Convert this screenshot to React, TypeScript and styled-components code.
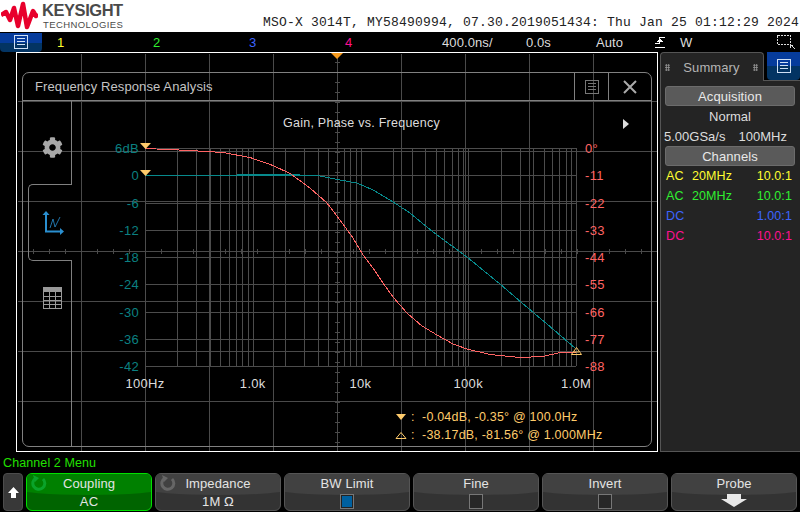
import styled, { createGlobalStyle } from "styled-components"
import { FaCog } from "react-icons/fa"

const GridLine = "#4a4a4a"
const Teal = "#0b8082"
const Salmon = "#ff6464"
const Marker = "#ffcb6b"

const Global = createGlobalStyle`
    html, body {
        margin: 0;
        padding: 0;
        background: #000;
    }
    body {
        font-family: "Liberation Sans", Arial, sans-serif;
        font-size: 13px;
        letter-spacing: 0.1px;
    }
`

const Screen = styled.div`
    width: 800px;
    height: 512px;
    overflow: hidden;
    display: flex;
    flex-direction: column;
    background: #000;
    color: #ddd;
`

const Header = styled.div`
    height: 32px;
    flex: 0 0 32px;
    background: #fff;
    display: flex;
    justify-content: space-between;
    align-items: flex-end;
`

const Logo = styled.div`
    display: flex;
    gap: 4px;
    padding-left: 1px;
    height: 32px;
    align-items: center;
`

const LogoWords = styled.div`
    display: flex;
    flex-direction: column;
    color: #4a4a4a;
`

const LogoName = styled.div`
    font-size: 16.5px;
    line-height: 14px;
    font-weight: 700;
    letter-spacing: -0.45px;
`

const LogoSub = styled.div`
    font-size: 9.5px;
    line-height: 11px;
    margin-top: 2px;
    margin-left: 1px;
    letter-spacing: 0.4px;
`

const DeviceLine = styled.div`
    font-family: "Liberation Mono", monospace;
    font-size: 13px;
    line-height: 15px;
    letter-spacing: 0.2px;
    color: #222;
    white-space: nowrap;
    padding-right: 1px;
    padding-bottom: 2px;
`

const StatusBar = styled.div`
    height: 20px;
    flex: 0 0 20px;
    display: flex;
    align-items: center;
`

const BlueButton = styled.div<{ $w: number; $h: number }>`
    width: ${p => p.$w}px;
    height: ${p => p.$h}px;
    flex: 0 0 ${p => p.$w}px;
    box-sizing: border-box;
    display: flex;
    align-items: center;
    justify-content: center;
    border-radius: 0 0 4px 4px;
    background: linear-gradient(#063c9c 0 50%, #033463 50% 100%);
`

const ChannelTag = styled.div<{ $color: string }>`
    width: 96px;
    flex: 0 0 96px;
    box-sizing: border-box;
    padding-left: 15px;
    color: ${p => p.$color};
    font-size: 13px;
`

const StatusItem = styled.div<{ $w: number }>`
    width: ${p => p.$w}px;
    flex: 0 0 ${p => p.$w}px;
    display: flex;
    align-items: center;
`

const StatusGap = styled.div`
    width: 16px;
    flex: 0 0 16px;
`

const Main = styled.div`
    height: 401px;
    flex: 0 0 401px;
    display: flex;
    padding-left: 16px;
    gap: 2px;
`

const Scope = styled.div`
    position: relative;
    width: 642px;
    height: 400px;
    flex: 0 0 642px;
    box-sizing: border-box;
    border: 1px solid #fff;
    box-shadow: inset 1px 1px 0 #000;
    background:
        linear-gradient(${GridLine} 1px, transparent 1px) 318px 9px / 5px 10px repeat-y,
        linear-gradient(90deg, ${GridLine} 1px, transparent 1px) 0 196px / 16px 5px repeat-x,
        linear-gradient(90deg, ${GridLine} 1px, transparent 1px) 0 0 / 64px 100%,
        linear-gradient(${GridLine} 1px, transparent 1px) 0 -2px / 100% 50px;
`

const TriggerMark = styled.div`
    position: absolute;
    left: 314px;
    top: 0;
    width: 0;
    height: 0;
    border-left: 6px solid transparent;
    border-right: 6px solid transparent;
    border-top: 6px solid #f59a1e;
`

const Dialog = styled.div`
    position: absolute;
    left: 5px;
    top: 19px;
    width: 630px;
    height: 375px;
    box-sizing: border-box;
    border: 1px solid #808080;
    border-radius: 7px;
    display: flex;
    flex-direction: column;
`

const TitleBar = styled.div`
    height: 28px;
    flex: 0 0 28px;
    box-sizing: border-box;
    border-bottom: 1px solid #808080;
    display: flex;
    align-items: center;
    justify-content: space-between;
    padding-left: 12px;
    color: #c4c4c4;
`

const TitleActions = styled.div`
    display: flex;
    height: 100%;
`

const TitleAction = styled.div<{ $w: number }>`
    width: ${p => p.$w}px;
    box-sizing: border-box;
    border-left: 1px solid #808080;
    display: flex;
    align-items: center;
    justify-content: center;
`

const DialogBody = styled.div`
    flex: 1;
    min-height: 0;
    display: flex;
`

const ToolColumn = styled.div`
    width: 49px;
    flex: 0 0 49px;
    display: flex;
    flex-direction: column;
`

const ToolTab = styled.div`
    height: 83px;
    box-sizing: border-box;
    border-right: 1px solid #808080;
    padding: 36px 0 0 19px;
`

const ToolTabActive = styled.div`
    height: 77px;
    margin-left: 5px;
    box-sizing: border-box;
    border: 1px solid #808080;
    border-right: none;
    border-radius: 5px 0 0 5px;
    padding: 26px 0 0 13px;
`

const ToolTabLast = styled.div`
    flex: 1;
    box-sizing: border-box;
    border-right: 1px solid #808080;
    padding: 26px 0 0 20px;
`

const PlotColumn = styled.div`
    flex: 1;
    min-width: 0;
    display: flex;
    flex-direction: column;
`

const PlotHead = styled.div`
    height: 37px;
    flex: 0 0 37px;
    box-sizing: border-box;
    display: flex;
    align-items: flex-start;
    padding: 15px 0 0 211px;
    color: #ddd;
    font-size: 12.5px;
    letter-spacing: 0.25px;
`

const PlotArrow = styled.div`
    margin: 3px 0 0 183px;
    width: 0;
    height: 0;
    border-top: 5px solid transparent;
    border-bottom: 5px solid transparent;
    border-left: 6px solid #ddd;
`

const PlotSvg = styled.svg`
    display: block;
    flex: 0 0 260px;
`

const AxisText = styled.text`
    font-family: "Liberation Sans", Arial, sans-serif;
    font-size: 13px;
    letter-spacing: 0.3px;
`

const Readouts = styled.div`
    flex: 1;
    display: flex;
    flex-direction: column;
    gap: 3px;
    padding: 11px 0 0 323px;
    color: ${Marker};
    font-size: 12.5px;
    letter-spacing: 0.2px;
`

const ReadoutRow = styled.div`
    display: flex;
    align-items: center;
    gap: 4px;
    height: 15px;
    white-space: nowrap;
`

const SidePanel = styled.div`
    width: 140px;
    flex: 0 0 140px;
    height: 400px;
    display: flex;
    flex-direction: column;
`

const TabRow = styled.div`
    height: 28px;
    flex: 0 0 28px;
    display: flex;
    gap: 3px;
`

const SummaryTab = styled.div`
    width: 104px;
    height: 29px;
    box-sizing: border-box;
    border: 1px solid #555;
    border-bottom: none;
    border-radius: 4px 4px 0 0;
    background: #242424;
    position: relative;
    z-index: 1;
    display: flex;
    align-items: center;
    justify-content: space-between;
    padding: 0 5px 0 4px;
    color: #b4b4b4;
`

const GripDots = styled.div`
    width: 5px;
    height: 7px;
    background: radial-gradient(circle, #999 0.8px, transparent 1px) 0 0 / 2.5px 2.4px;
`

const SideBody = styled.div`
    flex: 1;
    box-sizing: border-box;
    border: 1px solid #555;
    border-right: none;
    background: #242424;
    padding: 5px 5px 0 4px;
    display: flex;
    flex-direction: column;
    align-items: stretch;
`

const SectionHead = styled.div`
    height: 20px;
    box-sizing: border-box;
    border: 1px solid #6c6c6c;
    border-radius: 3px;
    background: #5a5a5a;
    color: #e8e8e8;
    display: flex;
    align-items: center;
    justify-content: center;
`

const SideLine = styled.div<{ $spread?: boolean }>`
    height: 20px;
    display: flex;
    align-items: center;
    justify-content: ${p => (p.$spread ? "space-between" : "center")};
    color: #ddd;
    white-space: nowrap;
    letter-spacing: 0;
    margin-left: ${p => (p.$spread ? "-1px" : "0")};
    padding-right: ${p => (p.$spread ? "8px" : "0")};
`

const ChannelRow = styled.div<{ $color: string }>`
    height: 20px;
    display: grid;
    grid-template-columns: 26px 1fr auto;
    align-items: center;
    color: ${p => p.$color};
    padding: 0 3px 0 1px;
    letter-spacing: 0.1px;
    font-size: 12.5px;
`

const MenuTitle = styled.div`
    height: 20px;
    flex: 0 0 20px;
    display: flex;
    align-items: center;
    padding-left: 3px;
    color: #22e000;
    font-size: 12.5px;
`

const SoftRow = styled.div`
    height: 38px;
    display: flex;
    gap: 3px;
    padding-left: 3px;
`

const UpKey = styled.div`
    width: 20px;
    height: 38px;
    box-sizing: border-box;
    border: 1px solid #4c4c4c;
    border-radius: 4px;
    background: #383838;
    display: flex;
    align-items: center;
    justify-content: center;
`

const SoftKey = styled.div<{ $on?: boolean }>`
    position: relative;
    width: 126px;
    height: 38px;
    box-sizing: border-box;
    overflow: hidden;
    border: 1px solid ${p => (p.$on ? "#00e000" : "#555")};
    border-radius: 6px;
    background: ${p => (p.$on ? "#006400" : "#333")};
    display: flex;
    flex-direction: column;
    align-items: center;
    color: #e4e4e4;
    &::before {
        content: "";
        position: absolute;
        left: -10px;
        right: -10px;
        top: -6px;
        height: 27px;
        border-radius: 0 0 50% 50% / 0 0 6px 6px;
        background: ${p => (p.$on ? "#008000" : "#414141")};
    }
    & > * {
        position: relative;
    }
`

const SoftLabel = styled.div`
    height: 19px;
    line-height: 19px;
`

const SoftValue = styled.div`
    height: 18px;
    line-height: 17px;
`

const SoftSpin = styled.svg`
    position: absolute !important;
    left: 3px;
    top: 1px;
`

const CheckBox = styled.div<{ $on?: boolean }>`
    width: 14px;
    height: 15px;
    box-sizing: border-box;
    border: 1px solid #777;
    background: ${p => (p.$on ? "#00609f" : "#272727")};
    box-shadow: ${p => (p.$on ? "inset 0 0 0 1px #222" : "none")};
    margin-top: 1px;
`

function MenuGlyph({ size, color }: { size: number, color: string }) {
    const s = size
    return <svg width={s} height={s} viewBox="0 0 14 14" shapeRendering="crispEdges">
        <rect x="0.5" y="0.5" width="13" height="13" fill="none" stroke={color} />
        <path d="M3 3.5h8M3 6.5h8M3 9.5h8" stroke={color} />
    </svg>
}

function Wave() {
    return <svg width="37" height="30" viewBox="0 0 37 30">
        <path
            d="M0 14 L5 11 L9 19 L13 7 L17 25 L22 3 L26 26 L32 10 L35 15 L37 13"
            fill="none"
            stroke="#e8002c"
            strokeWidth="4.5"
            strokeLinejoin="round"
        />
    </svg>
}

function SpinGlyph({ color }: { color: string }) {
    return <SoftSpin width="18" height="16" viewBox="0 0 18 16" fill="none">
        <path d="M6 3 A6 6 0 1 0 13 4" stroke={color} strokeWidth="3" />
        <path d="M3 0 L9 3 L5 7 Z" fill={color} />
    </SoftSpin>
}

const gainDb = ["6dB", "0", "-6", "-12", "-18", "-24", "-30", "-36", "-42"]
const phase = ["0°", "-11", "-22", "-33", "-44", "-55", "-66", "-77", "-88"]
const freq = ["100Hz", "1.0k", "10k", "100k", "1.0M"]

const PlotLeft = 145
const PlotRight = 576
const PlotTop = 148
const RowH = 27.25
const Decade = (PlotRight - PlotLeft) / 4

const logLines: number[] = []
for (let d = 0; d < 4; d++) {
    for (let m = 1; m < 10; m++) {
        logLines.push(Math.round(PlotLeft + Decade * (d + Math.log10(m))))
    }
}
logLines.push(PlotRight)

const gainCurve = "145,148.500 190,150.500 223,152.500 250,157.500 273,165.500 290,173.500 310,188 327,203 340,220 353,238 363,255 373,268 383,283 393,297 407,313 422,326 437,335 453,344 467,349 490,354.500 520,357.500 543,356.500 560,352.500 576,352.500"
const phaseCurve = "145,175.500 317,175.500 333,178.500 340,180 357,183 373,190 390,200 410,213 433,232 467,257 500,284 522,303 547,324 575,348"

function Plot() {
    return <PlotSvg width="579" height="260" viewBox="72 138 579 260">
        <g stroke="#4c4c4c" shapeRendering="crispEdges">
            {gainDb.map((_, i) => {
                const y = Math.round(PlotTop + RowH * i) + 0.5
                return <line key={i} x1={PlotLeft} x2={PlotRight} y1={y} y2={y} />
            })}
            {logLines.map((x, i) =>
                <line key={i} x1={x + 0.5} x2={x + 0.5} y1={PlotTop} y2={PlotTop + RowH * 8} />
            )}
        </g>
        {gainDb.map((t, i) =>
            <AxisText key={t} x={139} y={PlotTop + RowH * i + 5} textAnchor="end" fill={Teal}>{t}</AxisText>
        )}
        {phase.map((t, i) =>
            <AxisText key={t} x={585} y={PlotTop + RowH * i + 5} fill={Salmon}>{t}</AxisText>
        )}
        {freq.map((t, i) =>
            <AxisText key={t} x={PlotLeft + Decade * i} y={388} textAnchor="middle" fill="#ddd">{t}</AxisText>
        )}
        <polyline points={phaseCurve} fill="none" stroke="#078a8c" shapeRendering="crispEdges" />
        <line x1={237} x2={300} y1={175} y2={175} stroke="#078a8c" strokeWidth="2" shapeRendering="crispEdges" />
        <polyline points={gainCurve} fill="none" stroke={Salmon} shapeRendering="crispEdges" />
        <path d="M140 143h11l-5.500 6z" fill={Marker} />
        <path d="M140 170h11l-5.500 6z" fill={Marker} />
        <path d="M571.500 354.500h10l-5 -7z" fill="none" stroke={Marker} />
        <path d="M574 352h5" stroke={Marker} />
    </PlotSvg>
}

export default function App() {
    return <Screen>
        <Global />
        <Header>
            <Logo>
                <Wave />
                <LogoWords>
                    <LogoName>KEYSIGHT</LogoName>
                    <LogoSub>TECHNOLOGIES</LogoSub>
                </LogoWords>
            </Logo>
            <DeviceLine>MSO-X 3014T, MY58490994, 07.30.2019051434: Thu Jan 25 01:12:29 2024</DeviceLine>
        </Header>

        <StatusBar>
            <BlueButton $w={42} $h={19}><MenuGlyph size={14} color="#cfe0f5" /></BlueButton>
            <ChannelTag $color="#ffff30">1</ChannelTag>
            <ChannelTag $color="#30f030">2</ChannelTag>
            <ChannelTag $color="#3c64ff">3</ChannelTag>
            <ChannelTag $color="#ff1090">4</ChannelTag>
            <StatusGap />
            <StatusItem $w={84}>400.0ns/</StatusItem>
            <StatusItem $w={70}>0.0s</StatusItem>
            <StatusItem $w={59}>Auto</StatusItem>
            <StatusItem $w={25}>
                <svg width="10" height="12" viewBox="0 0 10 12" fill="none" stroke="#fff" shapeRendering="crispEdges">
                    <path d="M0 11.500h10M0 7.500h4.500V1h5" />
                    <path d="M1.500 5.500h6M2.500 4.500h4M3.500 3.500h2" />
                </svg>
            </StatusItem>
            <StatusItem $w={97}>W</StatusItem>
            <StatusItem $w={20}>
                <svg width="19" height="17" viewBox="0 0 19 17" fill="none" stroke="#ddd" shapeRendering="crispEdges">
                    <rect x="0.500" y="1.500" width="13" height="9" strokeDasharray="2 1" />
                    <path d="M14 11l4 4" />
                    <path d="M13 11h3M13 11v3" />
                </svg>
            </StatusItem>
        </StatusBar>

        <Main>
            <Scope>
                <TriggerMark />
                <Dialog>
                    <TitleBar>
                        Frequency Response Analysis
                        <TitleActions>
                            <TitleAction $w={34}><MenuGlyph size={14} color="#777" /></TitleAction>
                            <TitleAction $w={43}>
                                <svg width="14" height="14" viewBox="0 0 14 14">
                                    <path d="M1 1L13 13M13 1L1 13" stroke="#aaa" strokeWidth="2" />
                                </svg>
                            </TitleAction>
                        </TitleActions>
                    </TitleBar>
                    <DialogBody>
                        <ToolColumn>
                            <ToolTab><FaCog size={21} color="#a8a8a8" /></ToolTab>
                            <ToolTabActive>
                                <svg width="22" height="24" viewBox="0 0 22 24" fill="none">
                                    <path d="M4 2V20.500H20" stroke="#2a8fd0" strokeWidth="2" />
                                    <path d="M4 0L0.500 4H7.500ZM22 20.500L18 17V24Z" fill="#2a8fd0" />
                                    <path d="M8 17L11 8L13 16L18 6" stroke="#2a8fd0" strokeWidth="0.8" />
                                </svg>
                            </ToolTabActive>
                            <ToolTabLast>
                                <svg width="20" height="22" viewBox="0 0 20 22" shapeRendering="crispEdges">
                                    <rect x="0" y="0" width="19" height="5" fill="#999" />
                                    <path d="M0.500 5V21.500H18.500V5M0 9.500H19M0 13.500H19M0 17.500H19M6.500 5V21M12.500 5V21" fill="none" stroke="#999" />
                                </svg>
                            </ToolTabLast>
                        </ToolColumn>
                        <PlotColumn>
                            <PlotHead>
                                Gain, Phase vs. Frequency
                                <PlotArrow />
                            </PlotHead>
                            <Plot />
                            <Readouts>
                                <ReadoutRow>
                                    <svg width="12" height="8" viewBox="0 0 12 8"><path d="M1 1h10l-5 6z" fill={Marker} /></svg>
                                    <span>:&nbsp; -0.04dB, -0.35° @ 100.0Hz</span>
                                </ReadoutRow>
                                <ReadoutRow>
                                    <svg width="12" height="8" viewBox="0 0 12 8"><path d="M1 7.500h10l-5 -6z" fill="none" stroke={Marker} /></svg>
                                    <span>:&nbsp; -38.17dB, -81.56° @ 1.000MHz</span>
                                </ReadoutRow>
                            </Readouts>
                        </PlotColumn>
                    </DialogBody>
                </Dialog>
            </Scope>

            <SidePanel>
                <TabRow>
                    <SummaryTab>
                        <GripDots />
                        Summary
                        <GripDots />
                    </SummaryTab>
                    <BlueButton $w={33} $h={28}><MenuGlyph size={14} color="#cfe0f5" /></BlueButton>
                </TabRow>
                <SideBody>
                    <SectionHead>Acquisition</SectionHead>
                    <SideLine>Normal</SideLine>
                    <SideLine $spread>
                        <span>5.00GSa/s</span>
                        <span>100MHz</span>
                    </SideLine>
                    <SectionHead>Channels</SectionHead>
                    <ChannelRow $color="#ffff30"><span>AC</span><span>20MHz</span><span>10.0:1</span></ChannelRow>
                    <ChannelRow $color="#30f030"><span>AC</span><span>20MHz</span><span>10.0:1</span></ChannelRow>
                    <ChannelRow $color="#3c64ff"><span>DC</span><span></span><span>1.00:1</span></ChannelRow>
                    <ChannelRow $color="#ff1090"><span>DC</span><span></span><span>10.0:1</span></ChannelRow>
                </SideBody>
            </SidePanel>
        </Main>

        <MenuTitle>Channel 2 Menu</MenuTitle>
        <SoftRow>
            <UpKey>
                <svg width="11" height="11" viewBox="0 0 11 11"><path d="M5.500 0L11 6H8V11H3V6H0Z" fill="#fff" /></svg>
            </UpKey>
            <SoftKey $on>
                <SpinGlyph color="#0aa32a" />
                <SoftLabel>Coupling</SoftLabel>
                <SoftValue>AC</SoftValue>
            </SoftKey>
            <SoftKey>
                <SpinGlyph color="#666" />
                <SoftLabel>Impedance</SoftLabel>
                <SoftValue>1M Ω</SoftValue>
            </SoftKey>
            <SoftKey>
                <SoftLabel>BW Limit</SoftLabel>
                <CheckBox $on />
            </SoftKey>
            <SoftKey>
                <SoftLabel>Fine</SoftLabel>
                <CheckBox />
            </SoftKey>
            <SoftKey>
                <SoftLabel>Invert</SoftLabel>
                <CheckBox />
            </SoftKey>
            <SoftKey>
                <SoftLabel>Probe</SoftLabel>
                <svg width="26" height="14" viewBox="0 0 26 14"><path d="M6 1H20V6H26L13 14L0 6H6Z" fill="#e8e8e8" /></svg>
            </SoftKey>
        </SoftRow>
    </Screen>
}
